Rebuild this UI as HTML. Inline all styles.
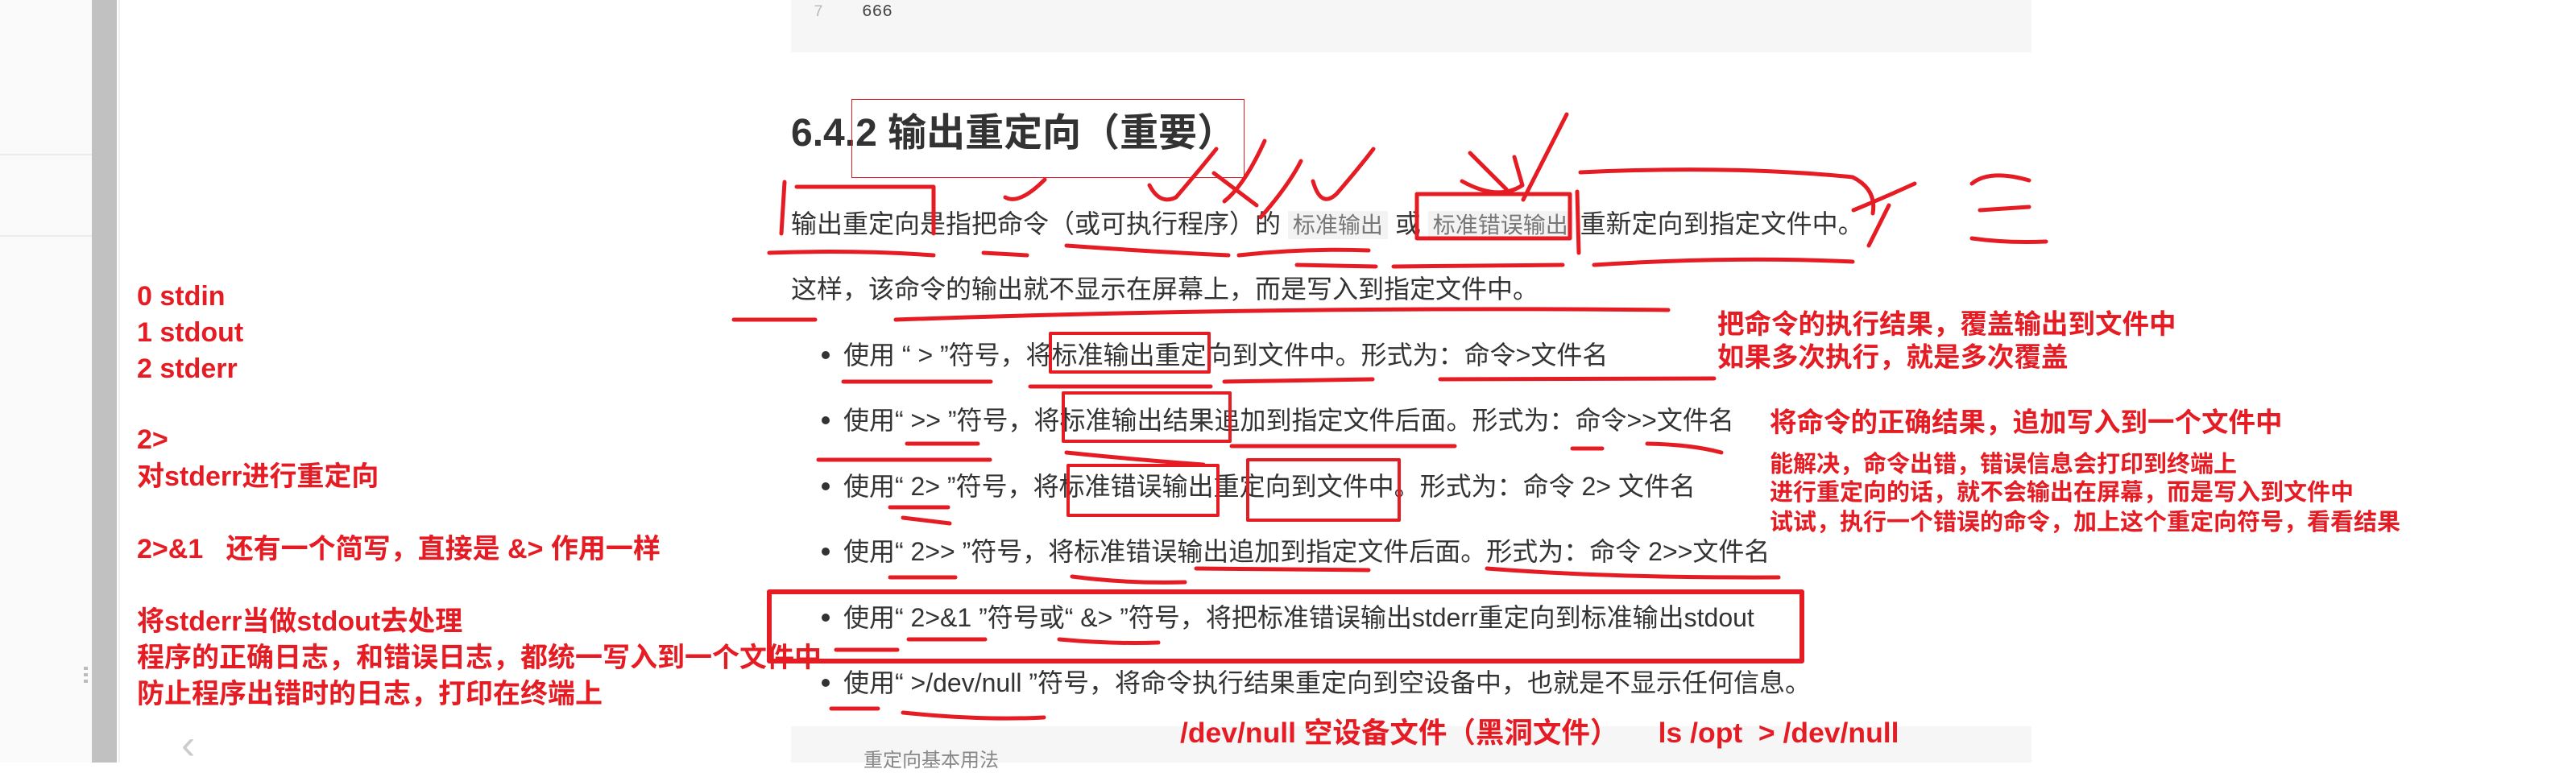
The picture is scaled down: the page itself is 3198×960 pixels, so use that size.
<!DOCTYPE html>
<html><head><meta charset="utf-8"><style>
*{margin:0;padding:0;box-sizing:border-box}
body{width:3198px;height:947px;overflow:hidden;background:#fff;position:relative;font-family:"Liberation Sans","Noto Sans CJK SC",sans-serif;color:#333}
.a{position:absolute;white-space:nowrap}
.r{color:#e51c23;font-weight:bold;font-family:"Liberation Sans","Noto Sans CJK SC",sans-serif}
.l{font-size:34px;line-height:44px}
.t{font-size:32px;line-height:44px}
.code{background:#f3f3f3;color:#777;font-size:28px;padding:2px 6px}
.dot{position:absolute;width:10px;height:10px;border-radius:50%;background:#333}
</style></head><body>
<div class="a" style="left:0;top:0;width:114px;height:947px;background:#fafafa"></div>
<div class="a" style="left:0;top:191px;width:114px;height:2px;background:#ececec"></div>
<div class="a" style="left:0;top:292px;width:114px;height:2px;background:#ececec"></div>
<div class="a" style="left:114px;top:0;width:31px;height:947px;background:#c1c1c1"></div>
<div class="a" style="left:147px;top:0;width:2px;height:947px;background:#f0f0f0"></div>
<div class="a" style="left:104px;top:828px;width:5px;height:22px;background:repeating-linear-gradient(#bbb 0 4px,transparent 4px 8px)"></div>
<div class="a" style="left:225px;top:895px;font-size:52px;color:#ccc;line-height:60px">&lsaquo;</div>

<div class="a r l" style="left:170px;top:346px">0 stdin</div>
<div class="a r l" style="left:170px;top:391px">1 stdout</div>
<div class="a r l" style="left:170px;top:436px">2 stderr</div>
<div class="a r l" style="left:170px;top:524px">2&gt;</div>
<div class="a r l" style="left:170px;top:570px">对stderr进行重定向</div>
<div class="a r l" style="left:170px;top:660px">2&gt;&amp;1&nbsp;&nbsp; 还有一个简写，直接是 &amp;&gt; 作用一样</div>
<div class="a r l" style="left:170px;top:750px">将stderr当做stdout去处理</div>
<div class="a r l" style="left:170px;top:795px">程序的正确日志，和错误日志，都统一写入到一个文件中</div>
<div class="a r l" style="left:170px;top:840px">防止程序出错时的日志，打印在终端上</div>

<div class="a" style="left:982px;top:0;width:1540px;height:65px;background:#f6f6f7"></div>
<div class="a" style="left:1010px;top:2px;font-size:20px;color:#bbb;font-family:'Liberation Mono',monospace;line-height:28px">7</div>
<div class="a" style="left:1070px;top:2px;font-size:21px;color:#444;font-family:'Liberation Mono',monospace;line-height:28px">666</div>

<div class="a" style="left:982px;top:138px;font-size:48px;font-weight:bold;line-height:56px;color:#333">6.4.2 输出重定向（重要）</div>
<div class="a" style="left:1057px;top:123px;width:488px;height:98px;border:1px solid #e51c23"></div>

<div class="a t" style="left:982px;top:256px">输出重定向是指把命令（或可执行程序）的 <span class="code">标准输出</span> 或 <span class="code">标准错误输出</span> 重新定向到指定文件中。</div>
<div class="a t" style="left:982px;top:337px">这样，该命令的输出就不显示在屏幕上，而是写入到指定文件中。</div>

<div class="dot" style="left:1020px;top:436px"></div>
<div class="a t" style="left:1047px;top:419px">使用 “ &gt; ”符号，将标准输出重定向到文件中。形式为：命令&gt;文件名</div>
<div class="dot" style="left:1020px;top:517px"></div>
<div class="a t" style="left:1047px;top:500px">使用“ &gt;&gt; ”符号，将标准输出结果追加到指定文件后面。形式为：命令&gt;&gt;文件名</div>
<div class="dot" style="left:1020px;top:599px"></div>
<div class="a t" style="left:1047px;top:582px">使用“ 2&gt; ”符号，将标准错误输出重定向到文件中。形式为：命令 2&gt; 文件名</div>
<div class="dot" style="left:1020px;top:680px"></div>
<div class="a t" style="left:1047px;top:663px">使用“ 2&gt;&gt; ”符号，将标准错误输出追加到指定文件后面。形式为：命令 2&gt;&gt;文件名</div>
<div class="dot" style="left:1020px;top:762px"></div>
<div class="a t" style="left:1047px;top:745px">使用“ 2&gt;&amp;1 ”符号或“ &amp;&gt; ”符号，将把标准错误输出stderr重定向到标准输出stdout</div>
<div class="dot" style="left:1020px;top:843px"></div>
<div class="a t" style="left:1047px;top:826px">使用“ &gt;/dev/null ”符号，将命令执行结果重定向到空设备中，也就是不显示任何信息。</div>

<div class="a" style="left:982px;top:902px;width:1540px;height:45px;background:#f6f6f7"></div>
<div class="a" style="left:1072px;top:930px;font-size:24px;color:#888;line-height:30px">重定向基本用法</div>

<div class="a r" style="left:2132px;top:383px;font-size:33.5px;line-height:42px">把命令的执行结果，覆盖输出到文件中</div>
<div class="a r" style="left:2132px;top:424px;font-size:33.5px;line-height:42px">如果多次执行，就是多次覆盖</div>
<div class="a r" style="left:2197px;top:505px;font-size:33.5px;line-height:42px">将命令的正确结果，追加写入到一个文件中</div>
<div class="a r" style="left:2197px;top:559px;font-size:29px;line-height:36px">能解决，命令出错，错误信息会打印到终端上</div>
<div class="a r" style="left:2197px;top:594px;font-size:29px;line-height:36px">进行重定向的话，就不会输出在屏幕，而是写入到文件中</div>
<div class="a r" style="left:2197px;top:631px;font-size:29px;line-height:36px">试试，执行一个错误的命令，加上这个重定向符号，看看结果</div>
<div class="a r" style="left:1465px;top:889px;font-size:35.5px;line-height:42px">/dev/null 空设备文件（黑洞文件）&nbsp;&nbsp;&nbsp;&nbsp; ls /opt&nbsp; &gt; /dev/null</div>

<svg class="a" style="left:0;top:0" width="3198" height="947" viewBox="0 0 3198 947" fill="none" stroke="#e51c23" stroke-width="5" stroke-linecap="round" stroke-linejoin="round">
<path d="M974 226 L970 290"/>
<path d="M989 232 L1159 232 L1159 290"/>
<path d="M955 314 Q1060 310 1159 317"/>
<path d="M1221 314 L1275 317"/>
<path d="M1324 305 Q1420 312 1525 317"/>
<path d="M1538 317 Q1620 308 1699 311"/>
<path d="M1610 329 L1708 331"/>
<path d="M1730 331 L1940 329"/>
<path d="M1759 241 L1949 241 L1949 296 L1759 296 Z"/>
<path d="M1958 238 L1960 314"/>
<path d="M1979 329 Q2150 318 2300 325"/>
<path d="M1962 214 Q2150 205 2300 220 Q2330 235 2325 265"/>
<path d="M1248 245 Q1265 255 1297 223"/>
<path d="M1427 230 Q1440 255 1460 245 Q1490 210 1510 185"/>
<path d="M1507 215 L1560 255"/>
<path d="M1520 250 Q1545 230 1570 175"/>
<path d="M1630 225 Q1640 260 1660 240 Q1690 205 1705 185"/>
<path d="M1565 270 Q1600 230 1615 200"/>
<path d="M1825 190 L1870 235"/>
<path d="M1815 225 Q1860 250 1890 230 L1880 195"/>
<path d="M1945 142 L1891 248"/>
<path d="M2301 261 Q2340 245 2377 228"/>
<path d="M2345 255 L2320 305"/>
<path d="M2448 228 Q2470 210 2519 224"/>
<path d="M2458 261 L2519 257"/>
<path d="M2448 296 Q2490 302 2540 300"/>
<path d="M911 397 L1012 397"/>
<path d="M1112 397 Q1600 380 2071 385"/>
<path d="M1047 474 L1230 474"/>
<path d="M1279 480 L1503 480"/>
<path d="M1520 474 L1704 471"/>
<path d="M1788 471 L2128 470"/>
<path d="M1304 414 L1501 414 L1501 462 L1304 462 Z" stroke-width="4"/>
<path d="M1320 488 L1527 488 L1527 548 L1320 548 Z" stroke-width="4"/>
<path d="M1126 551 L1214 551"/>
<path d="M1529 554 L1806 554"/>
<path d="M1952 557 L1989 557"/>
<path d="M2045 551 Q2100 552 2137 562"/>
<path d="M1016 571 L1229 571"/>
<path d="M1324 562 Q1400 570 1494 577"/>
<path d="M1326 578 L1512 578 L1512 640 L1326 640 Z" stroke-width="4"/>
<path d="M1549 571 L1737 571 L1737 646 L1549 646 Z" stroke-width="4"/>
<path d="M1105 630 L1177 630"/>
<path d="M1121 643 L1179 650"/>
<path d="M1105 717 L1186 717"/>
<path d="M1331 716 Q1400 725 1471 723"/>
<path d="M1485 706 L1699 708"/>
<path d="M1846 706 Q2000 718 2208 717"/>
<path d="M955 735 L2237 735 L2237 821 L955 821 Z" stroke-width="6"/>
<path d="M1128 794 L1223 794"/>
<path d="M1315 794 Q1380 800 1438 798"/>
<path d="M1038 807 L1114 807"/>
<path d="M1032 880 L1090 880"/>
<path d="M1121 885 Q1220 895 1296 891"/>
</svg>
</body></html>
